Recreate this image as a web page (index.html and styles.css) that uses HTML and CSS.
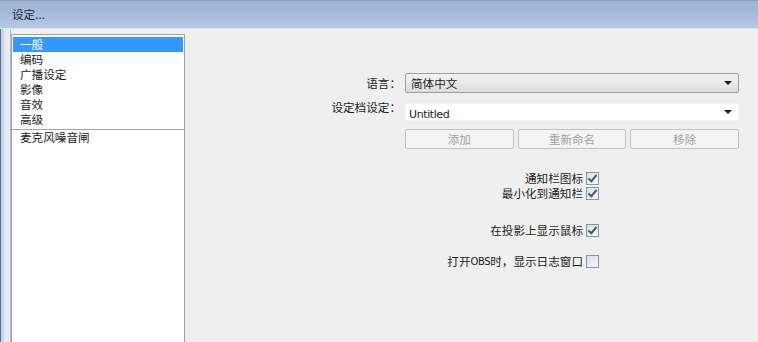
FILE: index.html
```html
<!DOCTYPE html>
<html lang="zh-CN">
<head>
    <link rel="stylesheet" href="styles.css">
    <meta charset="UTF-8">
    <title>设定...</title>
</head>
<body>
<div class="window">
    <div class="titlebar">设定...</div>
    <div class="body">
        <div class="frame-left"></div>
        <div class="listbox">
            <div class="item selected">一般</div>
            <div class="item">编码</div>
            <div class="item">广播设定</div>
            <div class="item">影像</div>
            <div class="item">音效</div>
            <div class="item">高级</div>
            <div class="sep"></div>
            <div class="item">麦克风噪音闸</div>
        </div>
        <div class="panel">
            <div class="form">
                <span class="label">语言：</span>
                <div class="combo combo-list"><span>简体中文</span><i class="arrow"></i></div>
                <span class="label">设定档设定：</span>
                <div class="combo combo-edit"><span class="latin">Untitled</span><i class="arrow"></i></div>
                <span></span>
                <div class="buttons">
                    <button class="btn" disabled>添加</button>
                    <button class="btn" disabled>重新命名</button>
                    <button class="btn" disabled>移除</button>
                </div>
            </div>

            <div class="checks">
                <label class="check">通知栏图标<i class="box on"></i></label>
                <label class="check">最小化到通知栏<i class="box on"></i></label>
                <label class="check gap-big">在投影上显示鼠标<i class="box on"></i></label>
                <label class="check gap">打开<span class="latin small">OBS</span>时，显示日志窗口<i class="box"></i></label>
            </div>
        </div>
    </div>
</div>
</body>
</html>
```
FILE: styles.css
```css
body{
    margin: 0;
    background: #efefef;
    font-family: "Noto Sans CJK SC", "DejaVu Sans", sans-serif;
    font-size: 11.6px;
    color: #1c1c1c;
}
.window{
    width: 758px;
    height: 342px;
    overflow: hidden;
}
.titlebar{
    height: 27px;
    line-height: 27px;
    padding-left: 12px;
    background: linear-gradient(#9eb2d2, #a8bedc 60%, #b4cbe5);
    border-top: 1px solid #8da2c0;
    border-bottom: 1px solid #dae4ef;
    color: #1e2633;
}
.body{
    display: flex;
    height: 313px;
}
.frame-left{
    width: 11px;
    background: linear-gradient(to right, #5f6d80 0, #5f6d80 1px, #c3d5ea 1px, #c3d5ea 4px, #e2ebf5 4px, #e8edf3 10px, #b9bcc1 10px);
}
.listbox{
    width: 170px;
    margin-top: 5px;
    border: 1px solid #9da2a9;
    border-bottom: none;
    background: #fff;
    padding: 2px 1px 0 1px;
}
.item{
    height: 15px;
    line-height: 15px;
    padding-left: 7px;
    color: #1a1a1a;
    overflow: hidden;
}
.item.selected{
    background: #3399ff;
    color: #fff;
}
.sep{
    height: 1px;
    background: #a7a7a7;
    margin: 2px -1px 0 -1px;
}
.panel{
    flex: 1;
}
.form{
    display: grid;
    grid-template-columns: 216px 334px;
    column-gap: 4px;
    margin-top: 44px;
}
.label{
    text-align: right;
    align-self: center;
    color: #222;
}
.combo{
    position: relative;
    height: 18px;
    line-height: 18px;
    padding-left: 5px;
    box-sizing: border-box;
}
.combo-list{
    height: 20px;
    line-height: 18px;
    border: 1px solid #9e9e9e;
    border-radius: 2px;
    background: linear-gradient(#f3f3f3, #e9e9e9 50%, #dcdcdc);
}
.combo-edit{
    margin-top: 10px;
    background: #fff;
    border: 1px solid #f4f4f4;
    padding-left: 3px;
}
.arrow{
    position: absolute;
    right: 6px;
    top: 50%;
    margin-top: -2px;
    width: 0;
    height: 0;
    border-left: 4px solid transparent;
    border-right: 4px solid transparent;
    border-top: 4px solid #1a1a1a;
}
.latin{
    font-family: "DejaVu Sans", sans-serif;
    font-size: 11px;
    letter-spacing: -0.4px;
}
.small{
    font-size: 10px;
}
.buttons{
    display: flex;
    gap: 4px;
    margin-top: 8px;
}
.btn{
    flex: 1;
    height: 20px;
    border: 1px solid #c2c2c2;
    border-radius: 2px;
    background: #f4f4f4;
    color: #a3a3a3;
    font-family: inherit;
    font-size: 11.6px;
    padding: 0;
}
.checks{
    display: flex;
    flex-direction: column;
    align-items: flex-end;
    width: 414px;
    margin-top: 22px;
}
.check{
    display: flex;
    align-items: center;
    height: 15px;
    line-height: 15px;
    color: #1c1c1c;
}
.check.gap-big{
    margin-top: 22px;
}
.check.gap{
    margin-top: 16px;
}
.box{
    display: inline-block;
    position: relative;
    width: 11px;
    height: 11px;
    margin-left: 3px;
    border: 1px solid #8f9399;
    background: linear-gradient(135deg, #d9dee6, #f6f7f9);
}
.box.on::after{
    content: "";
    position: absolute;
    left: 3px;
    top: 0px;
    width: 3px;
    height: 7px;
    border-right: 2px solid #46597a;
    border-bottom: 2px solid #46597a;
    transform: rotate(40deg);
}
```
